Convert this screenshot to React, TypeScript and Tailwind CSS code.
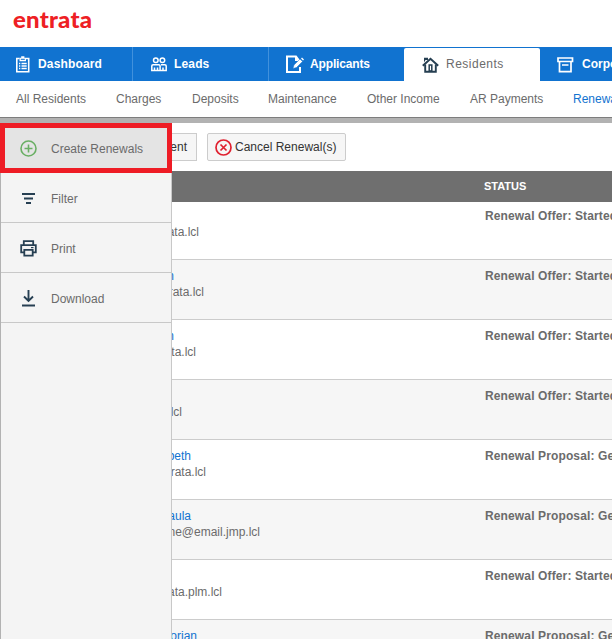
import type { ReactNode } from "react";

type Row = { name?: string; nameWidth?: string; mail?: string; mailWidth?: string; status: string };

const rows: Row[] = [
  { mail: "ata.lcl", mailWidth: "w-[199px]", status: "Renewal Offer: Started" },
  { name: "n", nameWidth: "w-[174px]", mail: "rata.lcl", mailWidth: "w-[204px]", status: "Renewal Offer: Started" },
  { name: "n", nameWidth: "w-[174px]", mail: "ta.lcl", mailWidth: "w-[196px]", status: "Renewal Offer: Started" },
  { mail: "lcl", mailWidth: "w-[182px]", status: "Renewal Offer: Started" },
  { name: "beth", nameWidth: "w-[191px]", mail: "rata.lcl", mailWidth: "w-[206px]", status: "Renewal Proposal: Ge" },
  { name: "aula", nameWidth: "w-[191px]", mail: "ne@email.jmp.lcl", mailWidth: "w-[260px]", status: "Renewal Proposal: Ge" },
  { mail: "ata.plm.lcl", mailWidth: "w-[222px]", status: "Renewal Offer: Started" },
  { name: "orian", nameWidth: "w-[197px]", status: "Renewal Proposal: Ge" },
];

function ClipboardIcon() {
  return (
    <svg width="14" height="17" viewBox="0 0 14 17" fill="none" stroke="white">
      <path d="M3.5 2.5H.8v13.3h11.9V2.5H10" strokeWidth="1.6" />
      <path d="M3.5 1.7h1.7V.2h3.2v1.5H10v3.5H3.5z" fill="white" stroke="none" />
      <path d="M4.8 3.3h4" stroke="#1173d0" />
      <path d="M3 7.5h1.3M3 10h1.3M3 12.5h1.3M5.5 7.5h5.2M5.5 10h5.2M5.5 12.5h5.2" strokeWidth="1.3" />
    </svg>
  );
}

function LeadsIcon() {
  return (
    <svg width="16" height="15" viewBox="0 0 16 15" fill="none" stroke="white" strokeWidth="1.5">
      <circle cx="4.8" cy="3.2" r="2.3" />
      <circle cx="11.4" cy="3.2" r="2.3" />
      <path d="M.8 13.6V9q0-1.3 1.3-1.3h5.7Q9.1 7.7 9.1 9v4.6zM3.5 13.5v-3M6.5 13.5v-3M10 7.7h3.9q1.3 0 1.3 1.3v4.6H9M12 13.5v-3" />
    </svg>
  );
}

function ApplicantsIcon() {
  return (
    <svg width="20" height="19" viewBox="0 0 20 19" fill="none" stroke="white">
      <path d="M14 5.5 11 1.5H2V17h13v-5" strokeWidth="2" />
      <path d="M10 1v5h5z" fill="white" stroke="none" />
      <path d="m8 13.5 1-3.5 6-6 2.5 2.5-6 6z" fill="white" stroke="#1173d0" strokeWidth=".5" />
      <path d="m16 3.5 1-1 2 2-1 1z" fill="white" stroke="none" />
    </svg>
  );
}

function HouseIcon() {
  return (
    <svg width="17" height="16" viewBox="0 0 17 16" fill="none" stroke="#263f52">
      <path d="m.8 8.8 7.7-7 7.7 7" strokeWidth="2" />
      <path d="M3.2 7.5v7.2h10.6V7.5" strokeWidth="1.9" />
      <path d="M2 5.5V.8h4V3H3.5z" fill="#263f52" stroke="none" />
      <path d="M7.2 14V8h2.6v6z" strokeWidth="1.5" />
    </svg>
  );
}

function BoxIcon() {
  return (
    <svg width="17" height="16" viewBox="0 0 17 16" fill="none" stroke="white" strokeWidth="1.7">
      <path d="M1 1h14.5v3.5H1zM2.5 4.5v10.2H14V4.5M5 8h6.5" />
    </svg>
  );
}

function PlusIcon() {
  return (
    <svg width="17" height="17" viewBox="0 0 17 17" fill="none" stroke="#6aaf64" strokeWidth="1.6">
      <circle cx="8.5" cy="8.5" r="7.5" />
      <path d="M8.5 4.5v8M4.5 8.5h8" />
    </svg>
  );
}

function FilterIcon() {
  return (
    <svg width="17" height="17" viewBox="0 0 17 17" fill="#263f52">
      <path d="M2 3h13v2H2zM4 7.5h9v2H4zM6 12h5v2H6z" />
    </svg>
  );
}

function PrintIcon() {
  return (
    <svg width="17" height="17" viewBox="0 0 17 17" fill="none" stroke="#263f52" strokeWidth="1.8">
      <path d="M3.8 5V1.2h9.4V5M4 12.3H1.2V5.2h14.6v7.1H13" />
      <path d="M4.3 9.8h8.4v5.9H4.3z" />
      <path d="M11 7.6h2.5" strokeWidth="1.2" />
    </svg>
  );
}

function DownloadIcon() {
  return (
    <svg width="17" height="17" viewBox="0 0 17 17" fill="none" stroke="#263f52" strokeWidth="1.9">
      <path d="M8.5 0v10.5M4 6.5 8.5 11 13 6.5M2 15.5h13" />
    </svg>
  );
}

function CancelIcon() {
  return (
    <svg width="17" height="17" viewBox="0 0 17 17" fill="none" stroke="#e0202f" strokeWidth="1.7">
      <circle cx="8.5" cy="8.5" r="7.5" />
      <path d="m5.5 5.5 6 6M11.5 5.5l-6 6" />
    </svg>
  );
}

function MenuItem({ icon, label }: { icon: ReactNode; label: string }) {
  return (
    <div className="flex h-[50px] items-center gap-[14px] border-b border-[#c8c8c8] pt-px pl-[19px]">
      {icon}
      <span className="pt-px">{label}</span>
    </div>
  );
}

function App() {
  return (
    <div className="h-[639px] w-[612px] overflow-hidden bg-white font-['Liberation_Sans',Arial,sans-serif] text-[12px] leading-4 text-[#6b6b6b]">
      <header className="h-[47px] pt-[6px] pl-[13px]">
        <span className="block w-fit origin-left scale-x-[1.09] font-['Lato',sans-serif] text-[22px] leading-7 font-black tracking-[0.2px] text-[#ee2024]">
          entrata
        </span>
      </header>

      <nav className="flex h-[34px] w-[612px] overflow-hidden bg-[#1173d0] font-bold whitespace-nowrap text-white">
        <div className="flex w-[133px] shrink-0 items-center gap-2 border-r border-[#4191dc] pt-px pl-4">
          <ClipboardIcon />
          <span className="pb-[2px] tracking-[0.15px]">Dashboard</span>
        </div>
        <div className="flex w-[136px] shrink-0 items-center gap-[7px] border-r border-[#4191dc] pt-px pl-[18px]">
          <LeadsIcon />
          <span className="pb-[2px] tracking-[0.15px]">Leads</span>
        </div>
        <div className="flex w-[135px] shrink-0 items-center gap-[5px] pt-px pl-4">
          <ApplicantsIcon />
          <span className="pb-[2px] tracking-[-0.15px]">Applicants</span>
        </div>
        <div className="mt-px flex w-[136px] shrink-0 items-center gap-[7px] rounded-t-[2px] bg-white pl-[18px] font-normal text-[#6b6b6b]">
          <HouseIcon />
          <span className="pb-px tracking-[0.5px]">Residents</span>
        </div>
        <div className="flex shrink-0 items-center gap-2 pt-px pl-[17px]">
          <BoxIcon />
          <span className="pb-[2px]">Corpo</span>
        </div>
      </nav>

      <div className="flex h-[37px] w-[612px] items-center gap-[30px] overflow-hidden border-b border-[#7d7d7d] pl-4 whitespace-nowrap">
        <span className="w-[70px] shrink-0">All Residents</span>
        <span className="w-[46px] shrink-0">Charges</span>
        <span className="w-[46px] shrink-0">Deposits</span>
        <span className="w-[69px] shrink-0">Maintenance</span>
        <span className="w-[73px] shrink-0">Other Income</span>
        <span className="w-[73px] shrink-0">AR Payments</span>
        <span className="shrink-0 text-[#1173d0]">Renewa</span>
      </div>
      <div className="h-[5px] bg-[#b2b2b2]" />

      <div className="relative h-[516px]">
        <div className="flex h-12 gap-[10px] pt-[10px] text-[#333]">
          <div className="flex h-7 w-[197px] items-center justify-end border border-[#ccc] bg-[#f6f6f6] pr-[9px]">ent</div>
          <div className="flex h-7 w-[139px] items-center gap-[3px] rounded-[2px] border border-[#ccc] bg-[#f6f6f6] pl-[7px]">
            <CancelIcon />
            <span className="whitespace-nowrap">Cancel Renewal(s)</span>
          </div>
        </div>

        <div className="flex h-[31px] items-center bg-[#6f6f6f] pb-px pl-[484px] text-[11px] font-bold text-white">STATUS</div>
        <div className="h-[437px] overflow-hidden">
          {rows.map((row, i) => (
            <div
              key={i}
              className={`flex border-b border-[#ccc] ${i === 0 ? "h-[58px] pt-[6px]" : "h-[60px] pt-2"} ${i % 2 ? "bg-[#f6f6f6]" : "bg-white"}`}
            >
              <div className="w-[485px] shrink-0">
                <div className={`h-4 text-right text-[#1173d0] ${row.nameWidth ?? ""}`}>{row.name}</div>
                <div className={`h-4 text-right ${row.mailWidth ?? ""}`}>{row.mail}</div>
              </div>
              <div className="font-bold tracking-[0.13px] whitespace-nowrap">{row.status}</div>
            </div>
          ))}
        </div>

        {/* action menu, opened over the table */}
        <aside className="absolute top-0 left-0 h-full w-[172px] border-r border-l border-r-[#c8c8c8] border-l-[#b2b2b2] bg-[#f4f4f4]">
          <div className="-mx-px flex h-[50px] w-[172px] items-center gap-[14px] border-[5px] border-[#ee1c25] bg-[#e4e4e4] pl-[15px]">
            <PlusIcon />
            <span className="pt-px">Create Renewals</span>
          </div>
          <MenuItem icon={<FilterIcon />} label="Filter" />
          <MenuItem icon={<PrintIcon />} label="Print" />
          <MenuItem icon={<DownloadIcon />} label="Download" />
        </aside>
      </div>
    </div>
  );
}

export default App;
